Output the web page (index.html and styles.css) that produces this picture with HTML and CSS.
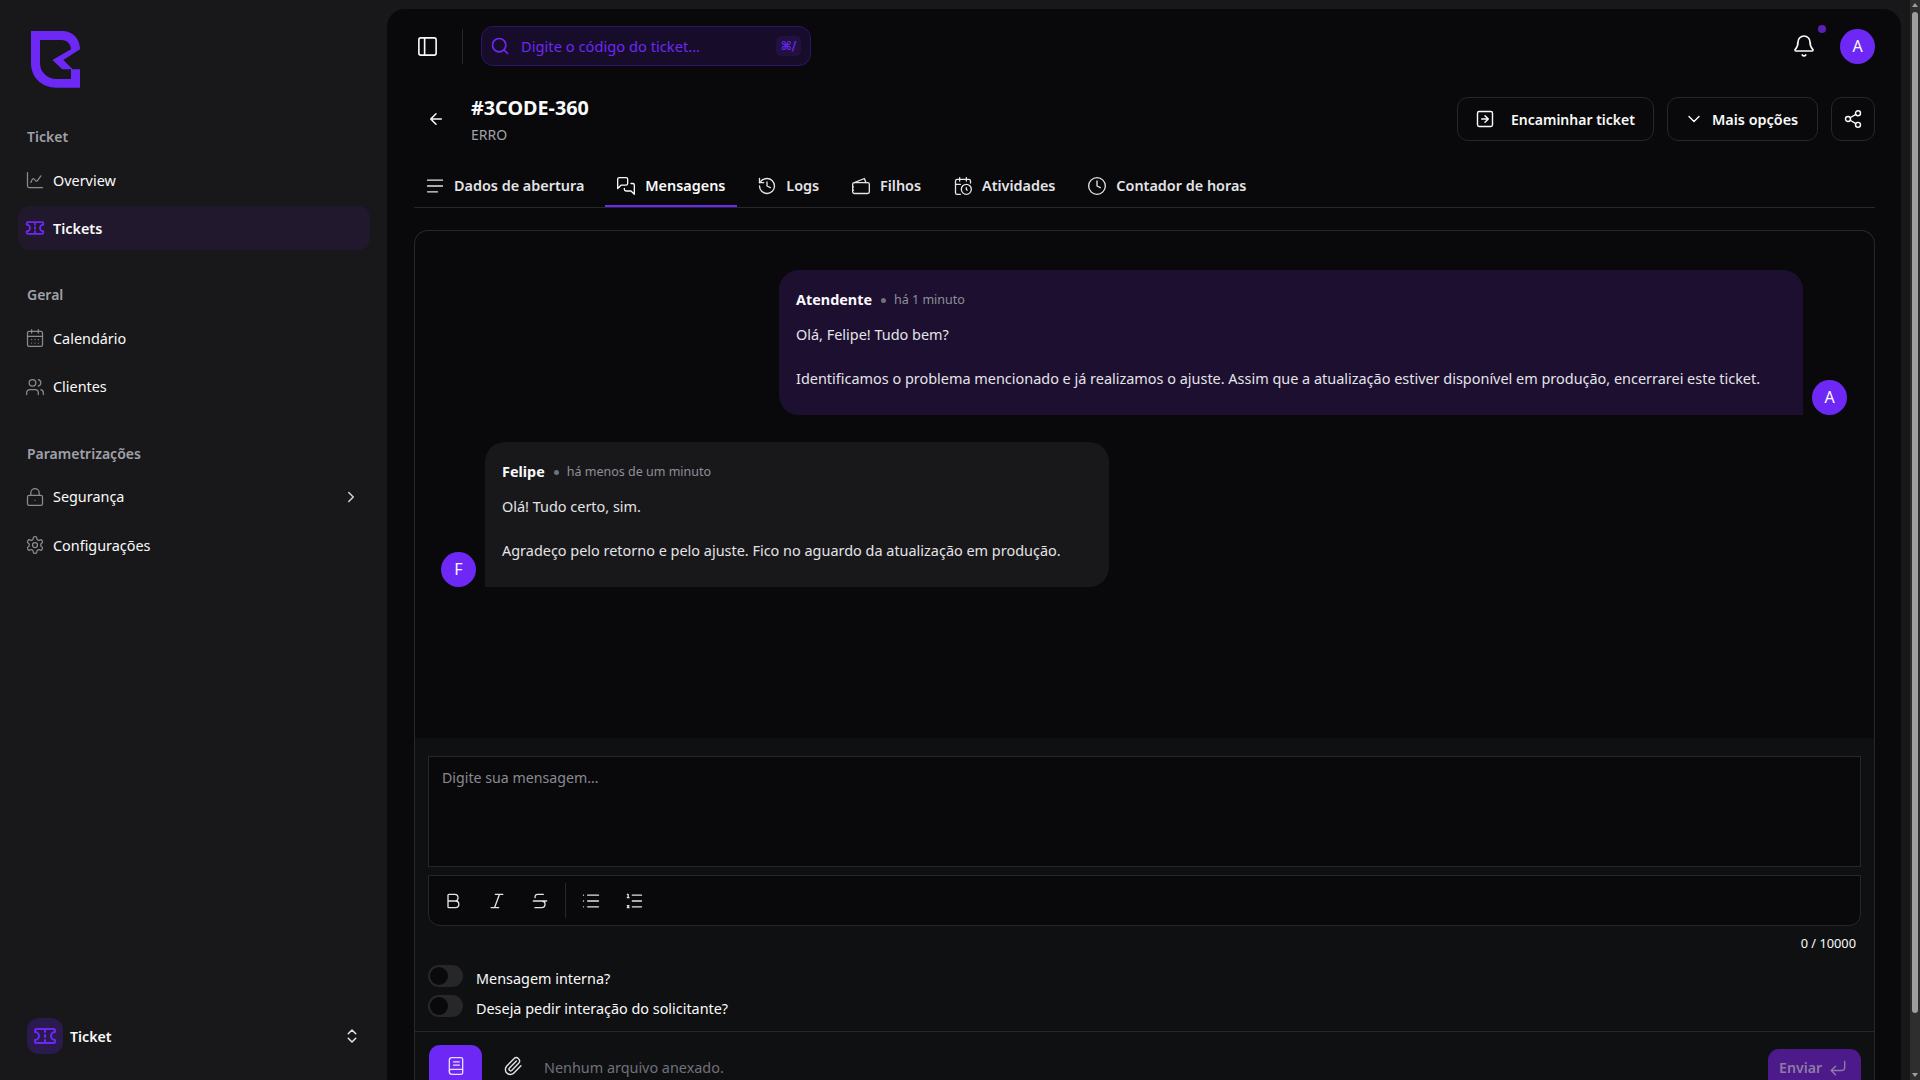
FILE: index.html
```html
<!DOCTYPE html>
<html lang="en">

<head>
    <meta charset="UTF-8">
    <meta name="viewport" content="width=device-width, initial-scale=1.0">
    <title>Ticket #3CODE-360</title>
    <link rel="stylesheet" href="styles.css">
</head>

<body>
    <svg class="sprite" xmlns="http://www.w3.org/2000/svg">
        <symbol id="i-chart" viewBox="0 0 24 24"><path d="M3 3v16a2 2 0 0 0 2 2h16"/><path d="M7 15c2-5 3-6 5-3s3 1 7-5"/></symbol>
        <symbol id="i-ticket" viewBox="0 0 24 24"><path d="M2 8V6.5A1.5 1.5 0 0 1 3.5 5h17A1.5 1.5 0 0 1 22 6.5V8a4 4 0 0 0 0 8v1.5a1.5 1.5 0 0 1-1.5 1.5h-17A1.5 1.5 0 0 1 2 17.5V16a4 4 0 0 0 0-8z"/><path d="M12 6v2M12 11v2M12 16v2"/></symbol>
        <symbol id="i-calendar" viewBox="0 0 24 24"><path d="M8 2v4M16 2v4"/><rect x="3" y="4" width="18" height="18" rx="2"/><path d="M3 10h18M8 14h.01M12 14h.01M16 14h.01M8 18h.01M12 18h.01M16 18h.01"/></symbol>
        <symbol id="i-users" viewBox="0 0 24 24"><path d="M16 21v-2a4 4 0 0 0-4-4H6a4 4 0 0 0-4 4v2"/><circle cx="9" cy="7" r="4"/><path d="M22 21v-2a4 4 0 0 0-3-3.87M16 3.13a4 4 0 0 1 0 7.75"/></symbol>
        <symbol id="i-lock" viewBox="0 0 24 24"><rect x="3" y="10" width="18" height="12" rx="2"/><path d="M7 10V7a5 5 0 0 1 10 0v3M12 16h.01"/></symbol>
        <symbol id="i-gear" viewBox="0 0 24 24"><path d="M12.22 2h-.44a2 2 0 0 0-2 2v.18a2 2 0 0 1-1 1.73l-.43.25a2 2 0 0 1-2 0l-.15-.08a2 2 0 0 0-2.73.73l-.22.38a2 2 0 0 0 .73 2.73l.15.1a2 2 0 0 1 1 1.72v.51a2 2 0 0 1-1 1.74l-.15.09a2 2 0 0 0-.73 2.73l.22.38a2 2 0 0 0 2.73.73l.15-.08a2 2 0 0 1 2 0l.43.25a2 2 0 0 1 1 1.73V20a2 2 0 0 0 2 2h.44a2 2 0 0 0 2-2v-.18a2 2 0 0 1 1-1.73l.43-.25a2 2 0 0 1 2 0l.15.08a2 2 0 0 0 2.73-.73l.22-.39a2 2 0 0 0-.73-2.73l-.15-.08a2 2 0 0 1-1-1.74v-.5a2 2 0 0 1 1-1.74l.15-.09a2 2 0 0 0 .73-2.73l-.22-.38a2 2 0 0 0-2.73-.73l-.15.08a2 2 0 0 1-2 0l-.43-.25a2 2 0 0 1-1-1.73V4a2 2 0 0 0-2-2z"/><circle cx="12" cy="12" r="3"/></symbol>
        <symbol id="i-right" viewBox="0 0 24 24"><path d="m9 18 6-6-6-6"/></symbol>
        <symbol id="i-updown" viewBox="0 0 24 24"><path d="m7 15 5 5 5-5M7 9l5-5 5 5"/></symbol>
        <symbol id="i-panel" viewBox="0 0 24 24"><rect x="3" y="3" width="18" height="18" rx="2"/><path d="M9 3v18"/></symbol>
        <symbol id="i-search" viewBox="0 0 24 24"><circle cx="11" cy="11" r="8"/><path d="m21 21-4.3-4.3"/></symbol>
        <symbol id="i-bell" viewBox="0 0 24 24"><path d="M10.3 21a2 2 0 0 0 3.4 0"/><path d="M3.3 15.3A1 1 0 0 0 4 17h16a1 1 0 0 0 .74-1.67C19.4 14 18 12.5 18 8A6 6 0 0 0 6 8c0 4.5-1.4 6-2.7 7.3"/></symbol>
        <symbol id="i-back" viewBox="0 0 24 24"><path d="m12 19-7-7 7-7M19 12H5"/></symbol>
        <symbol id="i-forward" viewBox="0 0 24 24"><rect x="3" y="3" width="18" height="18" rx="2"/><path d="M8 12h8M12 16l4-4-4-4"/></symbol>
        <symbol id="i-down" viewBox="0 0 24 24"><path d="m6 9 6 6 6-6"/></symbol>
        <symbol id="i-share" viewBox="0 0 24 24"><circle cx="18" cy="5" r="3"/><circle cx="6" cy="12" r="3"/><circle cx="18" cy="19" r="3"/><path d="m8.59 13.51 6.83 3.98M15.41 6.51l-6.82 3.98"/></symbol>
        <symbol id="i-lines" viewBox="0 0 24 24"><path d="M3 5h18M3 12h18M3 19h12"/></symbol>
        <symbol id="i-chat" viewBox="0 0 24 24"><path d="M14 9a2 2 0 0 1-2 2H6l-4 4V4a2 2 0 0 1 2-2h8a2 2 0 0 1 2 2z"/><path d="M18 9h2a2 2 0 0 1 2 2v11l-4-4h-6a2 2 0 0 1-2-2v-1"/></symbol>
        <symbol id="i-history" viewBox="0 0 24 24"><path d="M3 12a9 9 0 1 0 9-9 9.75 9.75 0 0 0-6.74 2.74L3 8"/><path d="M3 3v5h5M12 7v5l4 2"/></symbol>
        <symbol id="i-wallet" viewBox="0 0 24 24"><path d="M4 8 16 3l2 5"/><rect x="2" y="8" width="20" height="13" rx="2"/><path d="M2 13h1M2 17h1"/></symbol>
        <symbol id="i-calclock" viewBox="0 0 24 24"><path d="M21 8.5V6a2 2 0 0 0-2-2H5a2 2 0 0 0-2 2v14a2 2 0 0 0 2 2h4M16 2v4M8 2v4M3 10h6"/><circle cx="16" cy="16" r="6"/><path d="M16 14v2l1 1"/></symbol>
        <symbol id="i-clock" viewBox="0 0 24 24"><circle cx="12" cy="12" r="10"/><path d="M12 6v6l4 2"/></symbol>
        <symbol id="i-bold" viewBox="0 0 24 24"><path d="M6 12h9a4 4 0 0 1 0 8H7a1 1 0 0 1-1-1V5a1 1 0 0 1 1-1h7a4 4 0 0 1 0 8"/></symbol>
        <symbol id="i-italic" viewBox="0 0 24 24"><path d="M19 4h-9M14 20H5M15 4 9 20"/></symbol>
        <symbol id="i-strike" viewBox="0 0 24 24"><path d="M16 4H9a3 3 0 0 0-2.83 4M14 12a4 4 0 0 1 0 8H6M4 12h16"/></symbol>
        <symbol id="i-list" viewBox="0 0 24 24"><path d="M3 5h.01M3 12h.01M3 19h.01M8 5h13M8 12h13M8 19h13"/></symbol>
        <symbol id="i-olist" viewBox="0 0 24 24"><path d="M10 5h11M10 12h11M10 19h11M4 4h1v4M4 8h2M6 17.5H4l2 2.5H4"/></symbol>
        <symbol id="i-book" viewBox="0 0 24 24"><path d="M4 5a3 3 0 0 1 3-3h11a2 2 0 0 1 2 2v16a2 2 0 0 1-2 2H7a3 3 0 0 1-3-3z"/><path d="M4 18a2 2 0 0 1 2-2h14M9 7h7M9 11h7"/></symbol>
        <symbol id="i-clip" viewBox="0 0 24 24"><path d="m16 6-8.4 8.6a2 2 0 0 0 2.8 2.8l8.4-8.6a4 4 0 0 0-5.7-5.6l-8.5 8.7a6 6 0 1 0 8.5 8.5l8.4-8.6"/></symbol>
        <symbol id="i-enter" viewBox="0 0 24 24"><path d="M20 4v7a4 4 0 0 1-4 4H4"/><path d="m9 10-5 5 5 5"/></symbol>
    </svg>

    <aside class="sidebar">
        <div class="logo">
            <svg width="50" height="58" viewBox="0 0 50 58">
                <path class="logo-mark" d="M0 0H31C42 0 49 8 49 18.3L32.3 29L41.7 38.3H49V56.7H25.7C10 56.7 0 46 0 32.3Z M9 9V32.3C9 41 16 48 25.7 48H40V38.3H31.3L21.3 29L40 18.3C40 13 36 9 30.7 9Z"/>
            </svg>
        </div>

        <div class="nav-title">Ticket</div>
        <a class="nav-item"><svg class="nav-icon"><use href="#i-chart"/></svg>Overview</a>
        <a class="nav-item active"><svg class="nav-icon"><use href="#i-ticket"/></svg>Tickets</a>

        <div class="nav-title">Geral</div>
        <a class="nav-item"><svg class="nav-icon"><use href="#i-calendar"/></svg>Calendário</a>
        <a class="nav-item"><svg class="nav-icon"><use href="#i-users"/></svg>Clientes</a>

        <div class="nav-title">Parametrizações</div>
        <a class="nav-item"><svg class="nav-icon"><use href="#i-lock"/></svg>Segurança<svg class="nav-caret"><use href="#i-right"/></svg></a>
        <a class="nav-item"><svg class="nav-icon"><use href="#i-gear"/></svg>Configurações</a>

        <div class="module">
            <span class="module-icon"><svg><use href="#i-ticket"/></svg></span>
            <span class="module-name">Ticket</span>
            <svg class="module-caret"><use href="#i-updown"/></svg>
        </div>
    </aside>

    <main class="main">
        <header class="topbar">
            <svg class="panel-icon"><use href="#i-panel"/></svg>
            <span class="topbar-sep"></span>
            <div class="search">
                <svg class="search-icon"><use href="#i-search"/></svg>
                <span class="search-text">Digite o código do ticket...</span>
                <kbd class="search-kbd">⌘/</kbd>
            </div>
            <div class="topbar-right">
                <span class="bell"><svg class="bell-icon"><use href="#i-bell"/></svg><i class="bell-dot"></i></span>
                <span class="avatar">A</span>
            </div>
        </header>

        <section class="ticket-head">
            <svg class="back-icon"><use href="#i-back"/></svg>
            <div class="ticket-title">
                <h1>#3CODE-360</h1>
                <p>ERRO</p>
            </div>
            <div class="ticket-actions">
                <button class="btn btn-forward"><svg><use href="#i-forward"/></svg>Encaminhar ticket</button>
                <button class="btn btn-more"><svg><use href="#i-down"/></svg>Mais opções</button>
                <button class="btn btn-share"><svg><use href="#i-share"/></svg></button>
            </div>
        </section>

        <nav class="tabs">
            <a class="tab"><svg><use href="#i-lines"/></svg>Dados de abertura</a>
            <a class="tab active"><svg><use href="#i-chat"/></svg>Mensagens</a>
            <a class="tab"><svg><use href="#i-history"/></svg>Logs</a>
            <a class="tab"><svg><use href="#i-wallet"/></svg>Filhos</a>
            <a class="tab"><svg><use href="#i-calclock"/></svg>Atividades</a>
            <a class="tab"><svg><use href="#i-clock"/></svg>Contador de horas</a>
        </nav>

        <section class="card">
            <div class="messages">
                <div class="message mine">
                    <div class="bubble">
                        <div class="bubble-head"><strong>Atendente</strong><i class="dot"></i><span>há 1 minuto</span></div>
                        <p>Olá, Felipe! Tudo bem?</p>
                        <p>Identificamos o problema mencionado e já realizamos o ajuste. Assim que a atualização estiver disponível em produção, encerrarei este ticket.</p>
                    </div>
                    <span class="avatar">A</span>
                </div>
                <div class="message theirs">
                    <span class="avatar">F</span>
                    <div class="bubble">
                        <div class="bubble-head"><strong>Felipe</strong><i class="dot"></i><span>há menos de um minuto</span></div>
                        <p>Olá! Tudo certo, sim.</p>
                        <p>Agradeço pelo retorno e pelo ajuste. Fico no aguardo da atualização em produção.</p>
                    </div>
                </div>
            </div>

            <div class="composer">
                <div class="editor">Digite sua mensagem...</div>
                <div class="toolbar">
                    <svg><use href="#i-bold"/></svg>
                    <svg><use href="#i-italic"/></svg>
                    <svg><use href="#i-strike"/></svg>
                    <span class="toolbar-sep"></span>
                    <svg><use href="#i-list"/></svg>
                    <svg><use href="#i-olist"/></svg>
                </div>
                <div class="counter">0 / 10000</div>
                <label class="switch-row"><span class="switch"></span>Mensagem interna?</label>
                <label class="switch-row"><span class="switch"></span>Deseja pedir interação do solicitante?</label>
            </div>

            <div class="composer-foot">
                <button class="btn-template"><svg><use href="#i-book"/></svg></button>
                <svg class="clip-icon"><use href="#i-clip"/></svg>
                <span class="no-file">Nenhum arquivo anexado.</span>
                <button class="btn-send">Enviar<svg><use href="#i-enter"/></svg></button>
            </div>
        </section>
    </main>

    <div class="scrollbar">
        <span class="arrow-up"></span>
        <span class="thumb"></span>
        <span class="arrow-down"></span>
    </div>
</body>

</html>
```

FILE: styles.css
```css
* {
    box-sizing: border-box;
}

body {
    margin: 0;
    height: 100vh;
    overflow: hidden;
    display: flex;
    font-family: "Noto Sans", sans-serif;
    font-size: 14.4px;
    color: #fafafa;
    background-color: #18181b;
}

.sprite {
    display: none;
}

svg {
    fill: none;
    stroke: currentColor;
    stroke-width: 2;
    stroke-linecap: round;
    stroke-linejoin: round;
    flex-shrink: 0;
}

/* Sidebar */
.sidebar {
    width: 387px;
    flex-shrink: 0;
    height: 100vh;
    padding: 31px 17px 0 18px;
    display: flex;
    flex-direction: column;
}

.logo {
    height: 58px;
    padding-left: 13px;
    margin-bottom: 36px;
}

.logo-mark {
    fill: #6d28f5;
    stroke: none;
    fill-rule: evenodd;
}

.nav-title {
    height: 22px;
    line-height: 24px;
    padding-left: 9px;
    font-size: 14px;
    font-weight: 600;
    color: #a1a1aa;
    margin-bottom: 11px;
}

.nav-item {
    display: flex;
    align-items: center;
    height: 44px;
    padding: 0 7px;
    margin-bottom: 4.4px;
    border-radius: 12px;
    color: #fafafa;
}

.nav-item + .nav-title {
    margin-top: 28.6px;
}

.nav-item.active {
    background-color: #21182e;
    font-weight: 600;
}

.nav-icon {
    width: 20px;
    height: 20px;
    margin-right: 8px;
    stroke-width: 1.5;
    color: #8a8a92;
}

.active .nav-icon {
    color: #6d28f5;
    stroke-width: 2.2;
}

.nav-caret {
    width: 18px;
    height: 18px;
    margin-left: auto;
    margin-right: 3px;
    color: #d4d4d8;
}

.module {
    margin-top: auto;
    margin-bottom: 26px;
    padding-left: 9px;
    display: flex;
    align-items: center;
    font-size: 14.2px;
    font-weight: 600;
}

.module-icon {
    width: 36px;
    height: 36px;
    border-radius: 12px;
    background-color: #2b1a4d;
    color: #6d28f5;
    display: flex;
    align-items: center;
    justify-content: center;
    margin-right: 7px;
}

.module-icon svg {
    width: 24px;
    height: 24px;
}

.module-caret {
    width: 18px;
    height: 18px;
    margin-left: auto;
    margin-right: 9px;
    color: #e4e4e7;
}

/* Main panel */
.main {
    width: 1514px;
    flex-shrink: 0;
    height: calc(100vh - 9px);
    margin-top: 9px;
    padding: 0 26px 0 27px;
    background-color: #09090b;
    border-radius: 18px 18px 0 0;
    overflow: hidden;
    display: flex;
    flex-direction: column;
}

.topbar {
    flex-shrink: 0;
    height: 74px;
    padding-left: 2px;
    display: flex;
    align-items: center;
}

.panel-icon {
    width: 23px;
    height: 23px;
    stroke-width: 1.7;
    color: #fafafa;
}

.topbar-sep {
    width: 1px;
    height: 35px;
    margin: 0 18px 0 23px;
    background-color: #27272a;
}

.search {
    width: 330px;
    height: 40px;
    padding: 0 9px 0 8px;
    display: flex;
    align-items: center;
    background-color: #170d2a;
    border: 1px solid #2e1567;
    border-radius: 12px;
    color: #6d28f5;
}

.search-icon {
    width: 20px;
    height: 20px;
}

.search-text {
    margin-left: 11px;
    font-size: 14.7px;
}

.search-kbd {
    margin-left: auto;
    width: 25px;
    height: 20px;
    border-radius: 5px;
    background-color: #221040;
    font-family: "DejaVu Sans", sans-serif;
    font-size: 12px;
    font-weight: 700;
    line-height: 20px;
    text-align: center;
}

.topbar-right {
    margin-left: auto;
    display: flex;
    align-items: center;
}

.bell {
    position: relative;
    display: flex;
    margin-right: 24px;
}

.bell-icon {
    width: 24px;
    height: 24px;
    stroke-width: 1.7;
    color: #fafafa;
}

.bell-dot {
    position: absolute;
    top: -9px;
    right: -10px;
    width: 8px;
    height: 8px;
    border-radius: 50%;
    background-color: #5b21b6;
}

.avatar {
    width: 35px;
    height: 35px;
    flex-shrink: 0;
    border-radius: 50%;
    background-color: #6d28f5;
    color: #fafafa;
    font-size: 16px;
    line-height: 35px;
    text-align: center;
}

.ticket-head {
    flex-shrink: 0;
    height: 72px;
    padding-left: 13px;
    display: flex;
    align-items: center;
}

.back-icon {
    width: 18px;
    height: 18px;
    margin-right: 26px;
    color: #fafafa;
}

.ticket-title {
    margin-top: 2px;
}

.ticket-title h1 {
    margin: 0;
    font-size: 19.8px;
    font-weight: 700;
    line-height: 28px;
}

.ticket-title p {
    margin: 2px 0 0;
    font-size: 14px;
    line-height: 22px;
    color: #a1a1aa;
}

.ticket-actions {
    margin-left: auto;
    display: flex;
    gap: 13px;
}

.btn {
    height: 44px;
    padding: 0;
    display: flex;
    align-items: center;
    background-color: transparent;
    border: 1px solid #27272a;
    border-radius: 11px;
    color: #fafafa;
    font-family: inherit;
    font-weight: 600;
}

.btn svg {
    width: 20px;
    height: 20px;
    stroke-width: 1.7;
}

.btn-forward {
    width: 197px;
    padding-left: 17px;
    font-size: 14px;
}

.btn-forward svg {
    margin-right: 16px;
}

.btn-more {
    width: 151px;
    padding-left: 16px;
    font-size: 14.4px;
}

.btn-more svg {
    margin-right: 8px;
}

.btn-share {
    width: 44px;
    justify-content: center;
}

.tabs {
    flex-shrink: 0;
    height: 44px;
    margin-top: 9px;
    border-bottom: 1px solid #27272a;
    display: flex;
    gap: 8.9px;
}

.tab {
    height: 43px;
    padding: 0 12px 0 11px;
    display: flex;
    align-items: center;
    font-weight: 600;
    color: #e4e4e7;
}

.tab svg {
    width: 20px;
    height: 20px;
    margin-right: 9px;
    stroke-width: 1.6;
}

.tab.active {
    box-shadow: inset 0 -2px #6d28f5;
    color: #fafafa;
}

.card {
    flex: 1;
    min-height: 0;
    margin-top: 22px;
    border: 1px solid #27272a;
    border-bottom: 0;
    border-radius: 14px 14px 0 0;
    overflow: hidden;
    display: flex;
    flex-direction: column;
}

.messages {
    height: 507px;
    flex-shrink: 0;
    padding: 39px 27px 0 26px;
}

.message {
    display: flex;
    align-items: flex-end;
    gap: 9px;
    margin-bottom: 27px;
}

.message.mine {
    justify-content: flex-end;
}

.bubble {
    height: 145px;
    padding: 17px 17px 0;
    font-size: 14.45px;
    line-height: 24px;
    color: #e4e4e7;
}

.bubble p {
    margin: 0;
}

.bubble p + p {
    margin-top: 20px;
}

.mine .bubble {
    width: 1024px;
    background-color: #1d0f30;
    border-radius: 20px 20px 0 20px;
}

.theirs .bubble {
    width: 624px;
    background-color: #18181b;
    border-radius: 20px 20px 20px 0;
}

.bubble-head {
    display: flex;
    align-items: center;
    height: 26px;
    margin-bottom: 10px;
    color: #8f8f98;
    font-size: 12.5px;
}

.bubble-head strong {
    font-size: 14.4px;
    font-weight: 700;
    color: #fafafa;
}

.dot {
    width: 5px;
    height: 5px;
    margin: 0 8px 0 9px;
    border-radius: 50%;
    background-color: #71717a;
}

.composer {
    flex: 1;
    min-height: 0;
    background-color: #0f1012;
    padding: 18px 13px 0 13px;
}

.editor {
    height: 111px;
    padding: 9px 13px;
    background-color: #09090b;
    border: 1px solid #27272a;
    font-size: 14.2px;
    line-height: 24px;
    color: #8a8a92;
}

.toolbar {
    height: 51px;
    margin-top: 8px;
    padding: 0 14px;
    display: flex;
    align-items: center;
    gap: 23.5px;
    background-color: #09090b;
    border: 1px solid #27272a;
    border-radius: 0 0 12px 12px;
    color: #e4e4e7;
}

.toolbar svg {
    width: 20px;
    height: 20px;
    stroke-width: 1.6;
}

.toolbar-sep {
    width: 1px;
    height: 35px;
    margin: 0 -9px 0 -8.5px;
    background-color: #27272a;
}

.counter {
    height: 20px;
    margin-top: 7px;
    padding-right: 5px;
    text-align: right;
    font-size: 12.8px;
    line-height: 20px;
}

.switch-row {
    display: flex;
    align-items: center;
    height: 30px;
}

.counter + .switch-row {
    margin-top: 10px;
}

.switch {
    position: relative;
    width: 35px;
    height: 22px;
    margin: 0 13px 4px 0;
    border-radius: 11px;
    background-color: #27272a;
}

.switch::before {
    content: "";
    position: absolute;
    left: 2px;
    top: 2px;
    width: 18px;
    height: 18px;
    border-radius: 50%;
    background-color: #09090b;
}

.composer-foot {
    flex-shrink: 0;
    height: 49px;
    padding: 13px 13px 0 14px;
    background-color: #0f1012;
    border-top: 1px solid #27272a;
    display: flex;
    align-items: flex-start;
}

.btn-template {
    width: 53px;
    height: 44px;
    flex-shrink: 0;
    padding: 11px 0 0;
    border: 0;
    border-radius: 11px 11px 0 0;
    background-color: #6d28f5;
    color: #e9dcff;
    display: flex;
    justify-content: center;
}

.btn-template svg {
    width: 20px;
    height: 20px;
    stroke-width: 1.6;
}

.clip-icon {
    width: 20px;
    height: 20px;
    margin: 11px 0 0 21px;
    stroke-width: 1.7;
    color: #e4e4e7;
}

.no-file {
    margin: 11px 0 0 21px;
    line-height: 24px;
    color: #71717a;
}

.btn-send {
    margin-left: auto;
    margin-top: 4px;
    width: 93px;
    height: 40px;
    flex-shrink: 0;
    padding: 0 0 3px 11px;
    border: 0;
    border-radius: 11px 11px 0 0;
    background-color: #4c1a8a;
    color: #8d7ba6;
    font-family: inherit;
    font-size: 14.2px;
    font-weight: 600;
    display: flex;
    align-items: center;
    gap: 6px;
}

.btn-send svg {
    width: 20px;
    height: 20px;
    stroke-width: 1.7;
}

/* Fake page scrollbar */
.scrollbar {
    width: 19px;
    flex-shrink: 0;
    height: 100vh;
    margin-left: auto;
    position: relative;
    background: linear-gradient(to right, #18181b 9px, #2e2e2e 9px);
}

.thumb {
    position: absolute;
    top: 12px;
    left: 11px;
    width: 6px;
    height: 1001px;
    border-radius: 3px;
    background-color: #9e9e9e;
}

.arrow-up,
.arrow-down {
    position: absolute;
    left: 11px;
    border-left: 3px solid transparent;
    border-right: 3px solid transparent;
}

.arrow-up {
    top: 3px;
    border-bottom: 4px solid #9e9e9e;
}

.arrow-down {
    bottom: 3px;
    border-top: 4px solid #9e9e9e;
}
```
